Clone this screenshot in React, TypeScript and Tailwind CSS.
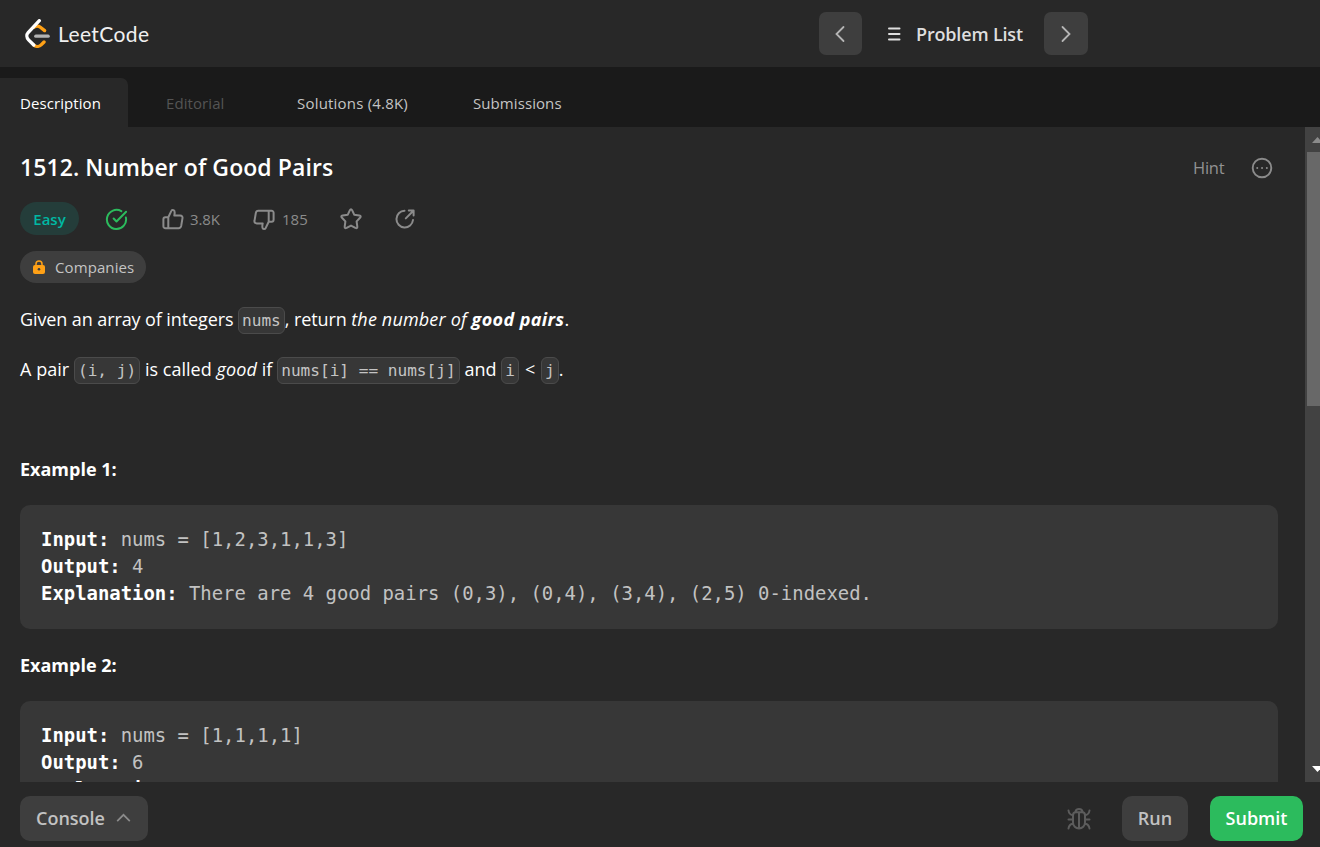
import React from "react";
import { CircleCheckBig } from "lucide-react";

const Code = ({ children }: { children: React.ReactNode }) => (
  <code className="inline-block h-[27px] rounded-[6px] border border-[#4b4b4b] bg-[#373737] px-[3px] font-['DejaVu_Sans_Mono',monospace] text-[16.1px] leading-[25px] tracking-normal text-[#c4c4c4] [word-spacing:0]">
    {children}
  </code>
);

const B = ({ children }: { children: React.ReactNode }) => (
  <strong className="font-bold text-white">{children}</strong>
);

const preClass =
  "h-[124px] shrink-0 rounded-[10px] bg-[#373737] pl-[21px] pt-[21px] font-['DejaVu_Sans_Mono',monospace] text-[18.91px] leading-[27px] text-[#c2c2c2]";

function Logo() {
  return (
    <svg viewBox="0 0 24 24" className="h-[29px] w-[29px] shrink-0" fill="none" strokeWidth="2.77" strokeLinecap="round">
      <path stroke="#ffa116" d="M9 6.9C10.4 5.7 12.8 5.6 14.4 6.8L17.9 9.6" />
      <path stroke="#ffa116" d="M8.9 21.5C10.6 23 13.3 23.1 15 21.4L17.4 19" />
      <path stroke="#b3b3b3" d="M10.6 14.2H20.8" />
      <path stroke="#fff" d="M13.5 1.4L4.25 11.3C2.8 12.9 2.9 15.6 4.6 17.3L8.9 21.5" />
    </svg>
  );
}

const Thumb = ({ className }: { className: string }) => (
  <svg viewBox="0 0 22 22" className={className} fill="none" stroke="currentColor" strokeWidth="2" strokeLinecap="round" strokeLinejoin="round">
    <path d="M6.300 9.200v11M6.300 9.200L9.500 2.600C9.900 1.700 11.800 1.500 12.400 2.900C12.900 4.100 12.600 6.200 12.300 7.600H18.200C19.900 7.600 20.800 8.700 20.500 10.200L19.200 17.900C18.900 19.400 18.100 20.200 16.700 20.200H3.400C2.200 20.200 1.400 19.400 1.400 18.200V11.200C1.400 10 2.200 9.200 3.400 9.200Z" />
  </svg>
);

export default function App() {
  return (
    <div className="flex h-[847px] w-[1320px] flex-col overflow-hidden bg-[#282828] font-['Open_Sans','Noto_Sans',sans-serif] text-white">
      <header className="flex h-[67px] shrink-0 items-center pl-[23px]">
        <Logo />
        <span className="ml-[6px] w-[760px] font-['Lato',sans-serif] text-[21px] leading-[30px] tracking-[0.4px] text-[#f0f0f0]">LeetCode</span>
        <button className="ml-px flex h-[43px] w-[43px] items-center justify-center rounded-[7px] bg-[#3e3e3e]">
          <svg viewBox="0 0 10 18" className="mr-px h-[18px] w-[10px]" fill="none" stroke="#b5b5b5" strokeWidth="1.8" strokeLinecap="round"><path d="M8.500 2L1.500 9l7 7" /></svg>
        </button>
        <svg viewBox="0 0 14 16" className="ml-[25px] h-4 w-[14px]" stroke="#dedede" strokeWidth="2" strokeLinecap="round"><path d="M2 2.500h10.500M2 8h10.500M2 13.500h10.500" /></svg>
        <span className="ml-[15px] w-[128px] whitespace-nowrap text-[18px] font-semibold leading-[26px] tracking-[-0.17px] text-[#dedede]">Problem List</span>
        <button className="flex h-[43px] w-[44px] items-center justify-center rounded-[7px] bg-[#3e3e3e]">
          <svg viewBox="0 0 10 18" className="h-[18px] w-[10px]" fill="none" stroke="#b5b5b5" strokeWidth="1.8" strokeLinecap="round"><path d="M1.500 2l7 7-7 7" /></svg>
        </button>
      </header>
      <nav className="flex h-[60px] shrink-0 items-end bg-[#1a1a1a] text-[15px] leading-[51px] tracking-[0.08px] text-[#c4c4c4]">
        <span className="h-[49px] w-32 rounded-tr-[7px] bg-[#282828] pl-5 text-white">Description</span>
        <span className="h-[49px] w-[131px] pl-[38px] text-[#545454]">Editorial</span>
        <span className="h-[49px] w-[176px] pl-[38px] tracking-[0.2px]">Solutions (4.8K)</span>
        <span className="h-[49px] pl-[38px]">Submissions</span>
      </nav>
      <div className="flex h-[655px] shrink-0">
        <main className="flex w-[1305px] flex-col overflow-hidden pl-5 pr-[27px]">
          <div className="mt-[23px] flex h-[34px] shrink-0 items-center">
            <h1 className="w-[1173px] whitespace-nowrap text-[23px] font-semibold leading-[34px] tracking-[0.07px]">1512. Number of Good Pairs</h1>
            <span className="w-[58px] pt-px text-[16.500px] font-medium leading-6 tracking-[-0.25px] text-[#929292]">Hint</span>
            <svg viewBox="0 0 22 22" className="mt-px h-[22px] w-[22px]" fill="none" stroke="#8b8b8b" strokeWidth="1.9"><circle cx="11" cy="11" r="9.300" /><path d="M6.200 11h.1M11 11h.1M15.800 11h.1" strokeLinecap="round" /></svg>
          </div>
          <div className="mt-[18px] flex h-[33px] shrink-0 items-center text-[15px] text-[#8b8b8b]">
            <span className="h-[33px] w-[59px] rounded-full bg-[#243d3a] text-center text-[15px] font-semibold leading-[34px] text-[#00b8a3]">Easy</span>
            <CircleCheckBig className="ml-[26px] mt-px h-[23px] w-[23px] text-[#2cbb5d]" strokeWidth={2.1} />
            <Thumb className="ml-[34px] h-[22px] w-[22px]" />
            <span className="ml-[6px] w-[63px] tracking-[-0.1px] leading-[34px]">3.8K</span>
            <Thumb className="mt-[2px] h-[22px] w-[22px] rotate-180" />
            <span className="ml-[7px] w-[57px] leading-[34px]">185</span>
            <svg viewBox="0 0 24 24" className="h-6 w-6" fill="none" stroke="currentColor" strokeWidth="2" strokeLinejoin="round"><path d="M10.900 3.200Q12 1.100 13.100 3.200L15.200 7.700L20.300 8.500Q22.700 9 21 10.800L17.600 14.400L18.300 19.500Q18.500 21.800 16.400 20.900L12 18.600L7.600 20.900Q5.500 21.800 5.700 19.500L6.400 14.400L3 10.800Q1.300 9 3.700 8.500L8.800 7.700Z" /></svg>
            <svg viewBox="0 0 22 22" className="ml-[31px] h-[22px] w-[22px]" fill="none" stroke="currentColor" strokeWidth="2" strokeLinecap="round" strokeLinejoin="round"><path d="M10.500 2.800A8.300 8.300 0 1 0 19 12M14.800 2.600h4.800v4.800M19.400 2.800l-7.600 7.600" /></svg>
          </div>
          <div className="mt-4 flex h-8 w-[126px] shrink-0 items-center rounded-full bg-[#3e3e3e] pl-[13px] text-[15px] leading-8 tracking-[0.1px] text-[#c4c4c4]">
            <svg viewBox="0 0 12 14" className="h-[14px] w-3"><path d="M3 6V4a3 3 0 0 1 6 0v2" fill="none" stroke="#ffa116" strokeWidth="1.500" /><rect y="5" width="12" height="9" rx="2" fill="#ffa116" /><circle cx="6" cy="9.300" r="1.300" fill="#3e3e3e" /></svg>
            <span className="ml-[10px]">Companies</span>
          </div>
          <p className="mt-[23px] h-[27px] shrink-0 whitespace-nowrap text-[18px] leading-[27px] tracking-[-0.1px]">
            Given an array of integers <Code>nums</Code>, return <em className="tracking-[0.17px]">the number of <strong className="tracking-[0.38px]">good pairs</strong></em>.
          </p>
          <p className="mt-[23px] h-[27px] shrink-0 whitespace-nowrap text-[18px] leading-[27px] [word-spacing:0.15px]">
            A pair <Code>(i, j)</Code> is called <em className="tracking-[0.1px]">good</em> if <Code>nums[i] == nums[j]</Code> and <Code>i</Code> <span className="mx-px">&lt;</span> <Code>j</Code>.
          </p>
          <p className="mt-[73px] h-[27px] shrink-0 text-[18px] font-bold leading-[27px]">Example 1:</p>
          <pre className={`${preClass} mt-[22px]`}><B>Input:</B>{" nums = [1,2,3,1,1,3]\n"}<B>Output:</B>{" 4\n"}<B>Explanation:</B>{" There are 4 good pairs (0,3), (0,4), (3,4), (2,5) 0-indexed."}</pre>
          <p className="mt-[23px] h-[27px] shrink-0 text-[18px] font-bold leading-[27px]">Example 2:</p>
          <pre className={`${preClass} mt-[22px]`}><B>Input:</B>{" nums = [1,1,1,1]\n"}<B>Output:</B>{" 6\n"}<B>Explanation:</B></pre>
        </main>
        <div className="flex w-[15px] flex-col overflow-hidden bg-[#424242] pl-[2px]">
          <div className="flex h-[25px] shrink-0 items-end pb-[9px] pl-[5px]"><svg viewBox="0 0 11 6" className="h-[6px] w-[11px] shrink-0"><path d="M0 6L5.500 0 11 6z" fill="#8b8b8b" /></svg></div>
          <div className="h-[254px] shrink-0 bg-[#686868]" />
          <div className="mt-auto flex h-4 pl-[5px]"><svg viewBox="0 0 11 6" className="h-[6px] w-[11px] shrink-0"><path d="M0 0h11L5.500 6z" fill="#fff" /></svg></div>
        </div>
      </div>
      <footer className="flex h-[65px] items-start pl-5 pt-[14px] text-[18px] font-semibold leading-[45px] text-[#c2c2c2]">
        <button className="flex h-[45px] w-32 items-center rounded-[10px] bg-[#3e3e3e] pl-4">
          Console
          <svg viewBox="0 0 16 10" className="mb-[2px] ml-[11px] h-[9px] w-[15px]" fill="none" stroke="#8b8b8b" strokeWidth="1.900"><path d="M1 9l7-7 7 7" /></svg>
        </button>
        <svg viewBox="0 0 24 24" className="ml-[919px] mt-[11px] h-6 w-6" fill="none" stroke="#5c5c5c" strokeWidth="2" strokeLinecap="round"><path d="M8.500 5V4.500a3.600 3.300 0 0 1 7 0V5M6 8.500C6 6.500 7 5.300 8.800 5.300h6.400C17 5.300 18 6.500 18 8.500v7a6 6 0 0 1-12 0zM12 5.500v16M1.500 12.500H6M18 12.500h4.500M1.500 3.500Q2 7.500 6 8.300M22.500 3.500Q22 7.500 18 8.300M1.500 21.500Q2 17.500 6 16.500M22.500 21.500Q22 17.500 18 16.500" /></svg>
        <button className="ml-[31px] h-[45px] w-[66px] rounded-[10px] bg-[#3e3e3e]">Run</button>
        <button className="ml-[22px] h-[45px] w-[93px] rounded-[10px] bg-[#2cbb5d] text-white">Submit</button>
      </footer>
    </div>
  );
}
